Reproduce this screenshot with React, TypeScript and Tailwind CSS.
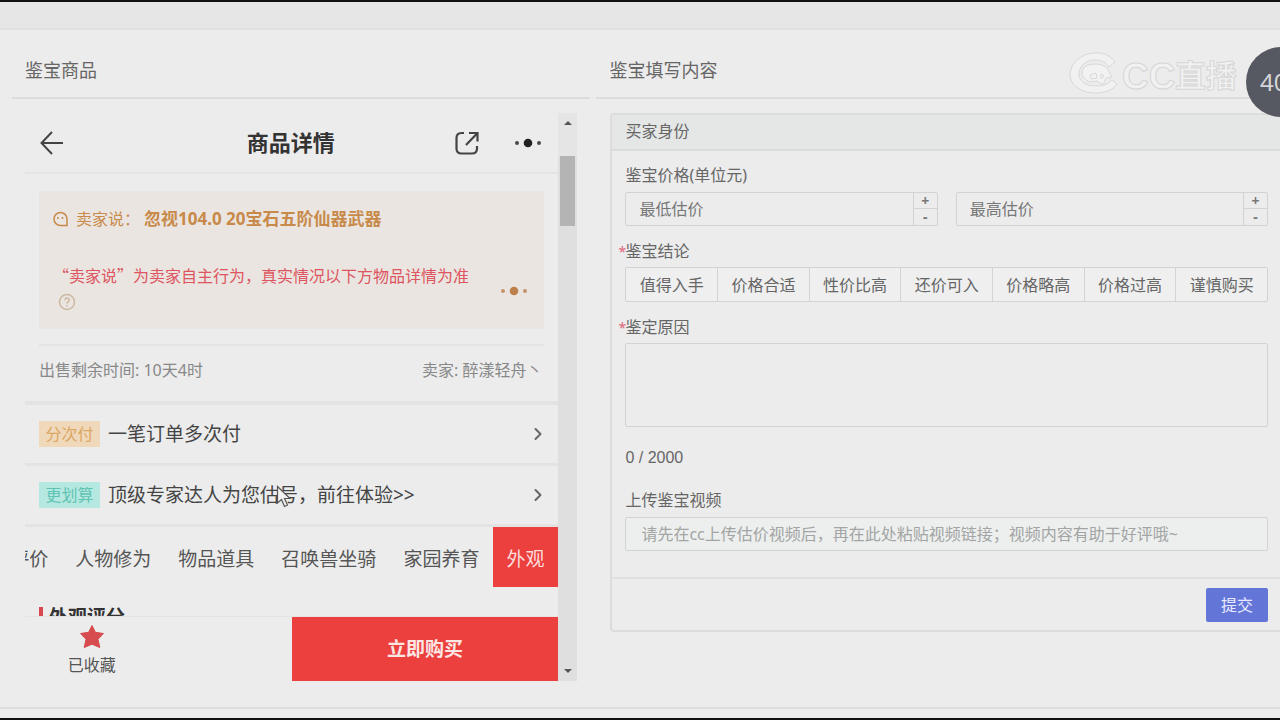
import clsx from "clsx"
import { ChevronRight } from "lucide-react"
import { useState } from "react"

interface IPriceProps {
  id: string
  label: string
}

interface IOfferProps {
  tag: string
  tagClass: string
  text: string
}

const verdicts = ["值得入手", "价格合适", "性价比高", "还价可入", "价格略高", "价格过高", "谨慎购买"]

const tabs = ["评价", "人物修为", "物品道具", "召唤兽坐骑", "家园养育", "外观"]

function Dots({ className }: { className?: string }) {
  return (
    <svg width="28" height="12" viewBox="0 0 28 12" className={className} fill="currentColor">
      <circle cx="3" cy="6" r="2" opacity="0.8" />
      <circle cx="14" cy="6" r="4.3" />
      <circle cx="25" cy="6" r="2" opacity="0.8" />
    </svg>
  )
}

function Watermark() {
  return (
    <svg
      width="172"
      height="46"
      viewBox="0 0 172 46"
      className="pointer-events-none absolute right-10 top-[47px]"
      fill="none"
    >
      <g stroke="#d8d8d8" strokeWidth="1">
        <path
          d="M47 13C42 6 34 3 26 4 12 5 3 14 2 25c0 11 11 19 25 19 10 0 18-3 22-9l-5-4c-4 4-9 6-17 6-9 0-16-5-16-12 0-8 7-14 16-14 6 0 11 2 14 7z"
          fill="#f1f1f1"
        />
        <path
          d="M14 24c0-6 6-9 13-9s13 3 14 8l3 5-6 1-3 7-6-4-7 1c-5-2-8-5-8-9z"
          fill="#f2f2f2"
        />
        <path d="M22 26l6-2 1 5-6 1zM33 25l3 2-3 3z" />
      </g>
      <g
        fill="#f1f1f1"
        stroke="#d6d6d6"
        strokeWidth="1"
        fontWeight="700"
        fontFamily="'Noto Sans CJK SC', sans-serif"
      >
        <text x="54" y="40" fontSize="37" fontFamily="'Liberation Sans', sans-serif">
          CC
        </text>
        <text x="107" y="38" fontSize="31">
          直播
        </text>
      </g>
    </svg>
  )
}

function Offer({ tag, tagClass, text }: IOfferProps) {
  return (
    <button
      type="button"
      className="flex h-[61px] w-full items-center gap-2 border-b-3 border-[#e3e3e3] pl-[14px] pr-[10px] text-left"
    >
      <span className={clsx("flex h-[26px] w-[61px] items-center justify-center text-base", tagClass)}>
        {tag}
      </span>
      <span className="flex-1 text-[19px] text-[#444]">{text}</span>
      <ChevronRight size={20} strokeWidth={2.4} className="text-[#666]" />
    </button>
  )
}

function ProductPage() {
  const [active, setActive] = useState("外观")

  return (
    <div className="mx-[13px] mt-[14px] flex">
      <div className="min-w-0 flex-1">
        <header className="flex h-[61px] items-center border-b-2 border-[#e4e4e4] pl-[14px] pr-4">
          <button type="button" aria-label="返回" className="w-[88px] text-[#444]">
            <svg width="26" height="26" viewBox="0 0 26 26" fill="none" stroke="currentColor" strokeWidth="2">
              <path d="M13 2L2.500 13L13 24M2.500 13H24" />
            </svg>
          </button>
          <h2 className="flex-1 text-center text-[22px] font-bold text-[#333]">商品详情</h2>
          <div className="flex items-center gap-[34px]">
            <button type="button" aria-label="分享" className="text-[#444]">
              <svg
                width="26"
                height="26"
                viewBox="0 0 26 26"
                fill="none"
                stroke="currentColor"
                strokeWidth="2.200"
              >
                <path d="M10 3H7.500Q2.500 3 2.500 8V18.500Q2.500 23.500 7.500 23.500H18Q23 23.500 23 18.500V16M15 3H23.500V11.500M23.500 3L12 15" />
              </svg>
            </button>
            <button type="button" aria-label="更多" className="text-[#222]">
              <Dots />
            </button>
          </div>
        </header>

        <section className="mx-[14px] mt-[17px] h-[138px] bg-[#eae5e1] px-[14px] pt-[15px] text-base leading-[26px]">
          <p className="flex items-center text-[#c88a4a]">
            <svg width="15" height="16" viewBox="0 0 15 16" fill="none" stroke="currentColor" strokeWidth="1.500">
              <path d="M14 8A6.500 6.500 0 1 0 7.500 14.500H14Z" />
              <path d="M5 6V8M9.500 6V8" />
            </svg>
            <span className="ml-2">卖家说：</span>
            <b className="ml-1 text-[17px]">忽视104.0 20宝石五阶仙器武器</b>
          </p>
          <div className="mt-[30px] flex items-center justify-between">
            <p className="font-['Noto_Sans_CJK_SC',sans-serif] text-[#dd5560]">
              “卖家说”为卖家自主行为，真实情况以下方物品详情为准
              <button type="button" aria-label="说明" className="ml-[5px] block h-7 text-[#cdb8a2]">
                <svg width="18" height="18" viewBox="0 0 18 18" fill="none" stroke="currentColor" strokeWidth="1.500">
                  <circle cx="9" cy="9" r="7.500" />
                  <path d="M6.800 7.200C6.800 4.300 11.300 4.500 11.200 7.200 11.100 8.700 9 8.800 9 10.700M9 12V13.500" />
                </svg>
              </button>
            </p>
            <button type="button" aria-label="展开" className="shrink-0 pr-[2px] pt-1 text-[#bd804c]">
              <Dots />
            </button>
          </div>
        </section>

        <div className="mx-[14px] mt-[15px] flex h-[57px] items-center justify-between border-t-2 border-[#e3e3e3] pb-2 pr-[2px] text-base text-[#888]">
          <span>出售剩余时间: 10天4时</span>
          <span>卖家: 醉漾轻舟丶</span>
        </div>

        <div className="border-t-4 border-[#e3e3e3]">
          <Offer tag="分次付" tagClass="bg-[#f0d9bb] text-[#dba764]" text="一笔订单多次付" />
          <Offer tag="更划算" tagClass="bg-[#b5e8e0] text-[#5fc4b4]" text="顶级专家达人为您估号，前往体验>>" />
        </div>

        <nav className="flex h-[60px] justify-end overflow-hidden text-[19px] text-[#555]">
          {tabs.map((tab) => (
            <button
              key={tab}
              type="button"
              onClick={() => setActive(tab)}
              className={clsx(
                "shrink-0 whitespace-nowrap pl-[13px] pr-[14px] pt-1",
                tab === active && "bg-[#ec403e] text-[#fbdcda]"
              )}
            >
              {tab}
            </button>
          ))}
        </nav>

        <div className="h-[29px] overflow-hidden pl-[14px] pt-5">
          <h3 className="flex gap-[6px] text-[19px] font-bold leading-5 text-[#333]">
            <i className="h-5 w-1 bg-[#d9484c]" />
            外观评分
          </h3>
        </div>

        <footer className="flex h-[65px] border-t border-[#e4e4e4]">
          <div className="flex flex-1">
            <button
              type="button"
              className="flex w-1/2 flex-col items-center gap-1 pt-[7px] text-base text-[#555]"
            >
              <svg width="26" height="25" viewBox="0 0 26 25" fill="#d74c4f" stroke="#d74c4f" strokeLinejoin="round">
                <path d="M13 1.500L16.400 8.300L24.500 9.500L19 15.200L20.800 23.500L13 20.200L5.200 23.500L7 15.200L1.500 9.500L9.600 8.300Z" />
              </svg>
              已收藏
            </button>
          </div>
          <button type="button" className="w-1/2 bg-[#ec403e] text-[19px] font-bold text-[#fbe6e4]">
            立即购买
          </button>
        </footer>
      </div>

      <div className="flex w-[19px] flex-col items-center bg-[#dfdfdf]">
        <div className="flex h-[43px] w-full justify-center bg-[#e5e5e5] pt-2">
          <i className="h-0 w-0 border-x-4 border-b-4 border-x-transparent border-b-[#555]" />
        </div>
        <i className="h-[70px] w-[15px] bg-[#b4b4b4]" />
        <i className="mb-2 mt-auto h-0 w-0 border-x-4 border-t-4 border-x-transparent border-t-[#555]" />
      </div>
    </div>
  )
}

function PriceInput({ id, label }: IPriceProps) {
  const [value, setValue] = useState("")

  const step = (n: number) => setValue(String(Math.max(0, Number(value) + n)))

  return (
    <div className="flex h-[34px] min-w-0 flex-1 rounded-xs border border-[#d3d3d3]">
      <input
        id={id}
        aria-label={label}
        placeholder={label}
        value={value}
        onChange={(e) => setValue(e.target.value)}
        className="min-w-0 flex-1 px-[13px] placeholder:text-[#777] outline-none"
      />
      <div className="flex w-6 flex-col border-l border-[#d3d3d3] text-sm font-bold leading-4 text-[#777]">
        <button type="button" onClick={() => step(1)} className="h-4 border-b border-[#d3d3d3] leading-[14px]">
          +
        </button>
        <button type="button" onClick={() => step(-1)} className="h-4 leading-[14px]">
          -
        </button>
      </div>
    </div>
  )
}

function Star() {
  return <span className="-ml-[7px] inline-block w-[7px] text-sm text-[#e0667a]">*</span>
}

function AppraisalForm() {
  const [reason, setReason] = useState("")

  return (
    <form
      onSubmit={(e) => e.preventDefault()}
      className="ml-[14px] mt-[14px] rounded-l-sm border-2 border-r-0 border-[#dcdcdc] text-base leading-6 text-[#666]"
    >
      <h2 className="flex h-9 items-center border-b-2 border-[#dadcdb] bg-[#e5e7e6] pb-[2px] pl-[13px] pr-3">
        买家身份
      </h2>

      <div className="pb-[26px] pl-[13px] pr-3 pt-3">
        <label htmlFor="lowest" className="block">
          鉴宝价格(单位元)
        </label>
        <div className="mt-[5px] flex gap-[18px]">
          <PriceInput id="lowest" label="最低估价" />
          <PriceInput id="highest" label="最高估价" />
        </div>

        <fieldset className="mt-[13px]">
          <legend>
            <Star />
            鉴宝结论
          </legend>
          <div className="mt-[4px] flex h-[35px] rounded-xs border border-[#d3d3d3] bg-[#eeefee]">
            {verdicts.map((verdict) => (
              <label
                key={verdict}
                className="flex flex-1 items-center justify-center whitespace-nowrap border-r border-[#d3d3d3] last:border-r-0 has-checked:bg-[#dfe2f3]"
              >
                <input type="radio" name="verdict" value={verdict} className="sr-only" />
                {verdict}
              </label>
            ))}
          </div>
        </fieldset>

        <label htmlFor="reason" className="mt-[13px] block">
          <Star />
          鉴定原因
        </label>
        <textarea
          id="reason"
          maxLength={2000}
          value={reason}
          onChange={(e) => setReason(e.target.value)}
          className="mt-[4px] block h-[84px] w-full resize-none rounded-xs border border-[#d3d3d3] px-[13px] py-2 outline-none"
        />
        <p className="mt-[19px] font-['Liberation_Sans',sans-serif]">{reason.length} / 2000</p>

        <label htmlFor="video" className="mt-[18px] block">
          上传鉴宝视频
        </label>
        <input
          id="video"
          placeholder="请先在cc上传估价视频后，再在此处粘贴视频链接；视频内容有助于好评哦~"
          className="mt-[5px] block h-[34px] w-full rounded-xs border border-[#d3d3d3] bg-[#edefee] px-[15px] placeholder:text-[#a2a5a4] outline-none"
        />
      </div>

      <div className="flex justify-end border-t-2 border-[#e0e0e0] pb-2 pr-3 pt-[9px]">
        <button type="submit" className="h-[34px] w-[62px] rounded-xs bg-[#6475d8] text-[#e8ebff]">
          提交
        </button>
      </div>
    </form>
  )
}

function App() {
  return (
    <div className="relative flex min-h-screen flex-col overflow-hidden border-y-2 border-[#111] bg-[#ececec] font-['Noto_Sans','Noto_Sans_CJK_SC',sans-serif]">
      <div className="h-7 border-b-2 border-[#e0e0e0] bg-[#e6e6e6]" />

      <main className="grid flex-1 grid-cols-[11fr_13fr] gap-[6px] pl-3">
        <section className="min-w-0">
          <h1 className="flex h-[69px] items-center border-b-2 border-[#dcdcdc] px-[13px] pt-3 text-lg text-[#666]">
            鉴宝商品
          </h1>
          <ProductPage />
        </section>
        <section className="min-w-0">
          <h1 className="flex h-[69px] items-center border-b-2 border-[#dcdcdc] px-[13px] pt-3 text-lg text-[#666]">
            鉴宝填写内容
          </h1>
          <AppraisalForm />
        </section>
      </main>

      <div className="h-[11px] border-t-2 border-[#dedede] bg-[#eeeeee]" />

      <Watermark />
      <div className="absolute -right-9 top-[45px] flex size-[70px] items-center rounded-full bg-[#565962] pl-[14px] text-2xl text-[#d4d5d9]">
        40
      </div>

      <svg width="16" height="24" viewBox="0 0 16 24" className="pointer-events-none absolute left-[276px] top-[483px]">
        <path
          d="M1.500 1.500V18L5.500 14.500L8.500 21.500L11.500 20L8.500 13.500H14Z"
          fill="#f2f2f2"
          stroke="#555"
          strokeWidth="1.200"
        />
      </svg>
    </div>
  )
}

export default App
